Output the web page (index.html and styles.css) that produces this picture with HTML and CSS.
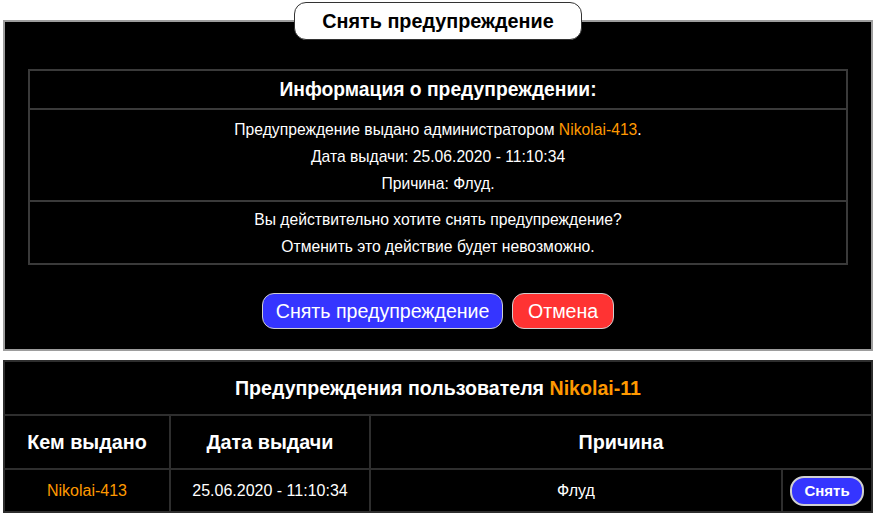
FILE: index.html
```html
<!DOCTYPE html>
<html lang="ru">
<head>
<meta charset="utf-8">
<title>Снять предупреждение</title>
<link rel="stylesheet" href="styles.css">
</head>
<body>
<div class="page">
  <fieldset class="panel">
    <legend class="panel-title">Снять предупреждение</legend>
    <table class="info">
      <tr><th class="info-head">Информация о предупреждении:</th></tr>
      <tr><td class="info-body">
        <div class="line">Предупреждение выдано администратором <span class="nick">Nikolai-413</span>.</div>
        <div class="line">Дата выдачи: 25.06.2020 - 11:10:34</div>
        <div class="line">Причина: Флуд.</div>
      </td></tr>
      <tr><td class="info-confirm">
        <div class="line">Вы действительно хотите снять предупреждение?</div>
        <div class="line">Отменить это действие будет невозможно.</div>
      </td></tr>
    </table>
    <div class="actions">
      <button class="btn btn-blue">Снять предупреждение</button>
      <button class="btn btn-red">Отмена</button>
    </div>
  </fieldset>

  <table class="list">
    <tr><th colspan="4" class="list-title">Предупреждения пользователя <span class="nick">Nikolai-11</span></th></tr>
    <tr class="cols">
      <th class="c1">Кем выдано</th>
      <th class="c2">Дата выдачи</th>
      <th colspan="2">Причина</th>
    </tr>
    <tr class="row">
      <td class="nick">Nikolai-413</td>
      <td>25.06.2020 - 11:10:34</td>
      <td>Флуд</td>
      <td class="c4"><button class="btn-small">Снять</button></td>
    </tr>
  </table>
</div>
</body>
</html>
```

FILE: styles.css
```css
html, body {
  margin: 0;
  padding: 0;
  background: #fff;
}
body {
  font-family: "Liberation Sans", Arial, sans-serif;
  color: #fff;
}
.page {
  padding: 2px 6px 0 3px;
}
.panel {
  margin: 0;
  border: 2px solid #9d9d9d;
  background: #000;
  padding: 29px 23px 20px;
  min-width: 0;
}
.panel-title {
  margin: 0 auto;
  padding: 8px 27px 8px;
  background: #fff;
  color: #000;
  border: 1px solid #333;
  border-radius: 12px;
  font-weight: bold;
  font-size: 19.8px;
  line-height: 20px;
}
.info {
  width: 100%;
  border-collapse: collapse;
  border: 2px solid #3a3a3a;
}
.info th, .info td {
  border: 2px solid #3a3a3a;
  text-align: center;
  padding: 0;
}
.info-head {
  font-size: 19.3px;
  height: 37px;
}
.info-body {
  font-size: 15.7px;
  padding: 6px 0 3px !important;
}
.info-confirm {
  font-size: 15.7px;
  padding: 4px 0 3px !important;
}
.line {
  line-height: 27px;
}
.nick {
  color: #ff9900;
}
.actions {
  text-align: center;
  padding-top: 28px;
}
.btn {
  font-family: "Liberation Sans", Arial, sans-serif;
  font-size: 19.6px;
  color: #fff;
  height: 36px;
  border: 1px solid #cfcfcf;
  border-radius: 12px;
  margin: 0 2px;
  vertical-align: top;
}
.btn-blue { background: #3535ff; padding: 0 13px; }
.btn-red { background: #ff3333; padding: 0 15px; }
.list {
  margin-top: 9px;
  width: 100%;
  border-collapse: collapse;
  border: 2px solid #3a3a3a;
  background: #000;
}
.list th, .list td {
  border: 2px solid #2e2e2e;
  text-align: center;
  padding: 0;
}
.list-title {
  font-size: 19.6px;
  height: 52px;
}
.cols th {
  font-size: 19.8px;
  height: 52px;
}
.c1 { width: 164px; }
.c2 { width: 198px; }
.row td {
  font-size: 16px;
  height: 41px;
}
.c4 { width: 88px; }
.btn-small {
  font-family: "Liberation Sans", Arial, sans-serif;
  font-weight: bold;
  font-size: 15px;
  color: #fff;
  background: #3535ff;
  border: 2px solid #d0d0d0;
  border-radius: 14px;
  height: 30px;
  padding: 0 12px;
}
```
